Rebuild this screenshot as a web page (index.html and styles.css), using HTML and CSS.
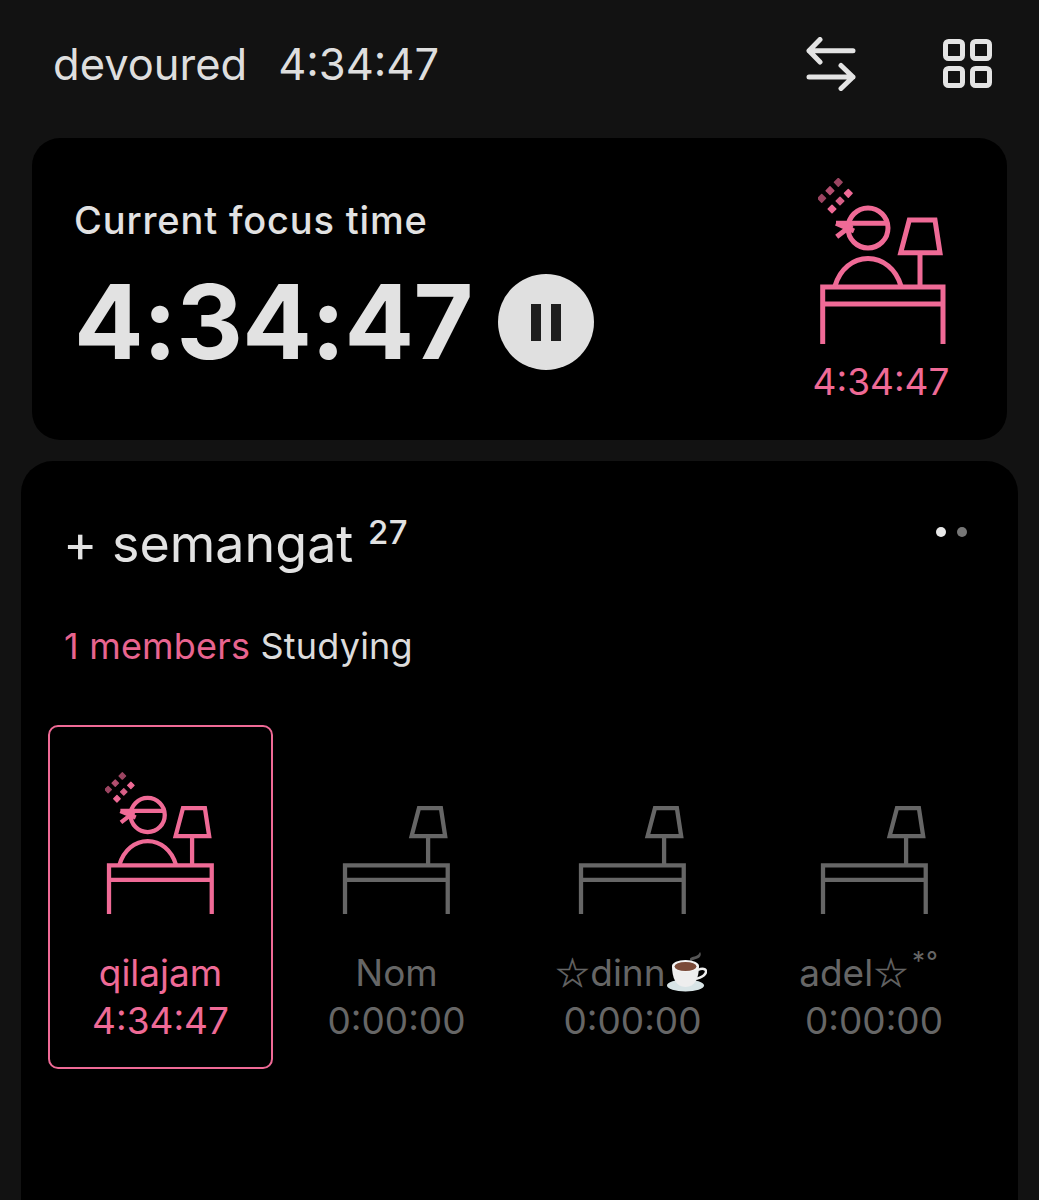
FILE: index.html
```html
<!DOCTYPE html>
<html>
    <head>
        <meta charset="utf-8">
        <title>focus</title>
        <link rel="stylesheet" href="styles.css">
    </head>
    <body>
        <svg class="defs">
            <symbol id="desk" viewBox="0 0 130 168">
                <path d="M4.7 166V109H125V166M4.7 126H125M102 109V74.7M82.7 74.7H122L117 42H91.3Z" fill="none" stroke="currentColor" stroke-width="5"/>
            </symbol>
            <symbol id="person" viewBox="0 0 130 168">
                <circle cx="50" cy="50" r="20" fill="none" stroke="currentColor" stroke-width="5"/>
                <path d="M18 45.3H70M18.7 58.7L34 47M18 45.3L36 53" fill="none" stroke="currentColor" stroke-width="5"/>
                <path d="M17 108C22 91 35 80.5 50 80.5S78 91 83 108" fill="none" stroke="currentColor" stroke-width="5"/>
                <g fill="currentColor" stroke="currentColor" stroke-width="1.5" stroke-linejoin="round">
                    <path d="M20.3 0.5L24.1 4.3 20.3 8.1 16.5 4.3Z" opacity=".65"/>
                    <path d="M12 8.9L15.8 12.7 12 16.5 8.2 12.7Z" opacity=".75"/>
                    <path d="M3.7 16.5L7.5 20.3 3.7 24.1-.1 20.3Z" opacity=".65"/>
                    <path d="M30.3 11.5L34.1 15.3 30.3 19.1 26.5 15.3Z"/>
                    <path d="M22 19.2L25.8 23 22 26.8 18.2 23Z" opacity=".9"/>
                    <path d="M14 27.2L17.8 31 14 34.8 10.2 31Z"/>
                </g>
            </symbol>
        </svg>

        <div class="header">
            <div class="header-text">
                <span>devoured</span>
                <span>4:34:47</span>
            </div>
            <div class="header-icons">
                <svg class="icon-swap" viewBox="0 0 50 54">
                    <path d="M47 13.7H3M14 2.5L3 13.7 14 25M3 40H47M35 28.5L47 40 35 51.5" fill="none" stroke="#e4e4e4" stroke-width="5" stroke-linecap="round" stroke-linejoin="round"/>
                </svg>
                <svg class="icon-grid" viewBox="0 0 50 50">
                    <rect x="2.5" y="2.5" width="17" height="17" rx="3"/>
                    <rect x="29.5" y="2.5" width="17" height="17" rx="3"/>
                    <rect x="2.5" y="29.5" width="17" height="17" rx="3"/>
                    <rect x="29.5" y="29.5" width="17" height="17" rx="3"/>
                </svg>
            </div>
        </div>

        <div class="hero">
            <div class="hero-left">
                <div class="hero-title">Current focus time</div>
                <div class="hero-row">
                    <span class="hero-time">4:34:47</span>
                    <div class="pause"><i></i><i></i></div>
                </div>
            </div>
            <div class="hero-right">
                <svg class="hero-icon"><use href="#desk"/><use href="#person"/></svg>
                <div class="hero-small">4:34:47</div>
            </div>
        </div>

        <div class="group">
            <div class="group-head">
                <div class="group-name">+ semangat <sup>27</sup></div>
                <div class="dots"><i class="on"></i><i></i></div>
            </div>
            <div class="group-sub"><span class="pink">1 members</span> Studying</div>
            <div class="members">
                <div class="member active">
                    <svg class="member-icon"><use href="#desk"/><use href="#person"/></svg>
                    <div class="member-name">qilajam</div>
                    <div class="member-time">4:34:47</div>
                </div>
                <div class="member">
                    <svg class="member-icon"><use href="#desk"/></svg>
                    <div class="member-name">Nom</div>
                    <div class="member-time">0:00:00</div>
                </div>
                <div class="member">
                    <svg class="member-icon"><use href="#desk"/></svg>
                    <div class="member-name"><span class="star">☆</span>dinn<svg class="coffee" viewBox="0 0 40 40">
                        <path d="M24 9C21 6 25 5 29 4 31 3 32 2 33 0 35 3 33 6 29 7 27 8 25 8 24 9Z" fill="#555"/>
                        <ellipse cx="18.5" cy="33.5" rx="18.5" ry="6" fill="#d8e4e6"/>
                        <path d="M5 14C5 26 9 35 18.5 35S32 26 32 14Z" fill="#eeeeee"/>
                        <ellipse cx="18.5" cy="14" rx="13.5" ry="6" fill="#f4f4f4"/>
                        <ellipse cx="18.5" cy="14.5" rx="11" ry="4.6" fill="#7a4a38"/>
                        <path d="M31 18C37 15 41 18 38 22 36 25 32 26 29 27" fill="none" stroke="#eeeeee" stroke-width="2.5"/>
                    </svg></div>
                    <div class="member-time">0:00:00</div>
                </div>
                <div class="member">
                    <svg class="member-icon"><use href="#desk"/></svg>
                    <div class="member-name">adel<span class="star">☆</span><sup class="tiny">*°</sup></div>
                    <div class="member-time">0:00:00</div>
                </div>
            </div>
        </div>
    </body>
</html>
```

FILE: styles.css
```css
* {
    padding: 0;
    margin: 0;
    box-sizing: border-box;
}
html, body {
    height: 1200px;
    overflow: hidden;
}
body {
    background-color: #121212;
    color: #e2e2e2;
    font-family: Inter, "Noto Sans", "DejaVu Sans", sans-serif;
}
.defs {
    display: none;
}
.header {
    height: 128px;
    margin-bottom: 10px;
    padding: 0 46px 0 53px;
    display: flex;
    align-items: center;
    justify-content: space-between;
}
.header-text {
    display: flex;
    gap: 31px;
    font-size: 43.5px;
    color: #dedede;
}
.header-icons {
    display: flex;
    align-items: center;
    gap: 87px;
}
.icon-swap {
    width: 50px;
    height: 54px;
}
.icon-grid {
    width: 50px;
    height: 50px;
}
.icon-grid rect {
    fill: none;
    stroke: #e4e4e4;
    stroke-width: 5;
}
.hero {
    height: 302px;
    margin: 0 32px 21px;
    padding: 40px 58px 0 42px;
    background-color: #000;
    border-radius: 28px;
    display: flex;
    justify-content: space-between;
}
.hero-title {
    margin-top: 20px;
    font-size: 38px;
    font-weight: 500;
    letter-spacing: .85px;
    line-height: 44px;
}
.hero-row {
    margin-top: 20px;
    display: flex;
    align-items: center;
    gap: 25px;
}
.hero-time {
    font-size: 103px;
    font-weight: 700;
    letter-spacing: -.8px;
    line-height: 120px;
    color: #e2e2e2;
}
.pause {
    width: 96px;
    height: 96px;
    border-radius: 50%;
    background-color: #e0e0e0;
    display: flex;
    align-items: center;
    justify-content: center;
    gap: 10px;
}
.pause i {
    width: 10px;
    height: 37px;
    background-color: #1e1e1e;
}
.hero-right {
    width: 136px;
    display: flex;
    flex-direction: column;
    align-items: center;
}
.hero-icon {
    width: 130px;
    height: 168px;
    margin-left: 4px;
    color: #ef6a96;
}
.hero-small {
    margin-top: 14px;
    font-size: 37px;
    line-height: 44px;
    color: #ef6a96;
}
.group {
    height: 790px;
    margin: 0 21px;
    padding: 0 27px;
    background-color: #000;
    border-radius: 32px;
}
.group-head {
    padding: 50px 24px 0 15px;
    display: flex;
    justify-content: space-between;
}
.group-name {
    font-size: 52px;
    line-height: 66px;
    color: #e2e2e2;
}
.group-name sup {
    font-size: 33px;
    font-weight: 500;
    letter-spacing: .5px;
    line-height: 0;
}
.dots {
    padding-top: 16px;
    display: flex;
    gap: 11px;
}
.dots i {
    width: 10px;
    height: 10px;
    border-radius: 50%;
    background-color: #777;
}
.dots i.on {
    background-color: #e8e8e8;
}
.group-sub {
    margin-top: 47px;
    margin-left: 16px;
    font-size: 36px;
    letter-spacing: .2px;
    line-height: 44px;
    color: #dcdcdc;
}
.pink {
    color: #e8648f;
}
.members {
    margin-top: 57px;
    display: grid;
    grid-template-columns: 225px 225px 225px 236px;
    column-gap: 11px;
}
.member {
    height: 344px;
    padding-top: 45px;
    border: 2px solid #0000;
    border-radius: 10px;
    color: #666;
    display: flex;
    flex-direction: column;
    align-items: center;
}
.member.active {
    border-color: #ef6a96;
    color: #ef6a96;
}
.member-icon {
    width: 111px;
    height: 144px;
    margin-bottom: 33px;
    flex-shrink: 0;
}
.member-name, .member-time {
    font-size: 37px;
    line-height: 48px;
    white-space: nowrap;
}
.member-name {
    display: flex;
    align-items: center;
}
.star {
    font-family: "DejaVu Sans", sans-serif;
    font-size: 40px;
    line-height: 47px;
    -webkit-text-stroke: .5px #666;
}
.coffee {
    width: 40px;
    height: 40px;
    margin-left: 1px;
    margin-top: -2px;
    margin-right: 4px;
}
.tiny {
    margin-left: 3px;
    margin-right: 10px;
    font-size: 26px;
    line-height: 24px;
    letter-spacing: 1px;
    align-self: flex-start;
}
```
